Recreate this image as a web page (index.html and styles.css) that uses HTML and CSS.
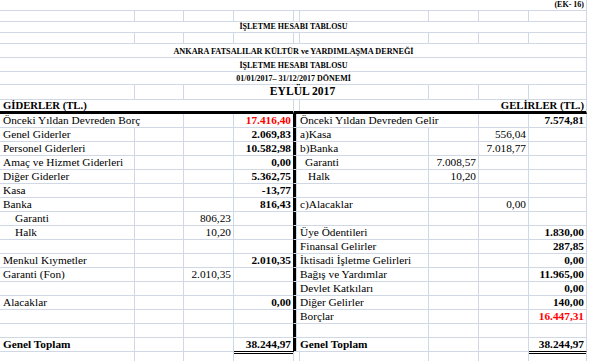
FILE: index.html
```html
<!DOCTYPE html>
<html lang="tr">
<head>
<meta charset="utf-8">
<title>İşletme Hesabı Tablosu</title>
<link rel="stylesheet" href="styles.css">
</head>
<body>
<div class="sheet">
  <!-- row 0 -->
  <div class="c s9 r t-small">(EK- 16)</div>
  <!-- row 1 -->
  <div class="c"></div><div class="c"></div><div class="c"></div><div class="c"></div><div class="c"></div><div class="c"></div><div class="c"></div><div class="c"></div><div class="c"></div>
  <!-- row 2 -->
  <div class="c s9 ctr t-small">İŞLETME HESABI TABLOSU</div>
  <!-- row 3 -->
  <div class="c"></div><div class="c"></div><div class="c"></div><div class="c"></div><div class="c"></div><div class="c"></div><div class="c"></div><div class="c"></div><div class="c"></div>
  <!-- row 4 -->
  <div class="c s9 ctr t-small t-wide">ANKARA FATSALILAR KÜLTÜR ve YARDIMLAŞMA DERNEĞİ</div>
  <!-- row 5 -->
  <div class="c s9 ctr t-small">İŞLETME HESABI TABLOSU</div>
  <!-- row 6 -->
  <div class="c s9 ctr t-small">01/01/2017– 31/12/2017 DÖNEMİ</div>
  <!-- row 7 -->
  <div class="c"></div><div class="c"></div>
  <div class="c s4 ctr t-month">EYLÜL 2017</div>
  <div class="c"></div><div class="c"></div><div class="c"></div>
  <!-- row 8 -->
  <div class="c s4 hd t-head">GİDERLER (TL.)</div>
  <div class="c hd"></div>
  <div class="c s4 hd r t-head">GELİRLER (TL.)</div>

  <!-- data 1 -->
  <div class="c s2">Önceki Yıldan Devreden Borç</div><div class="c"></div><div class="c r b red lb">17.416,40</div><div class="c bar"></div>
  <div class="c s2">Önceki Yıldan Devreden Gelir</div><div class="c"></div><div class="c r b">7.574,81</div>
  <!-- data 2 -->
  <div class="c">Genel Giderler</div><div class="c"></div><div class="c"></div><div class="c r b lb">2.069,83</div><div class="c bar"></div>
  <div class="c">a)Kasa</div><div class="c"></div><div class="c r">556,04</div><div class="c"></div>
  <!-- data 3 -->
  <div class="c">Personel Giderleri</div><div class="c"></div><div class="c"></div><div class="c r b lb">10.582,98</div><div class="c bar"></div>
  <div class="c">b)Banka</div><div class="c"></div><div class="c r">7.018,77</div><div class="c"></div>
  <!-- data 4 -->
  <div class="c">Amaç ve Hizmet Giderleri</div><div class="c"></div><div class="c"></div><div class="c r b lb">0,00</div><div class="c bar"></div>
  <div class="c in1">Garanti</div><div class="c r">7.008,57</div><div class="c"></div><div class="c"></div>
  <!-- data 5 -->
  <div class="c">Diğer Giderler</div><div class="c"></div><div class="c"></div><div class="c r b lb">5.362,75</div><div class="c bar"></div>
  <div class="c in2">Halk</div><div class="c r">10,20</div><div class="c"></div><div class="c"></div>
  <!-- data 6 -->
  <div class="c">Kasa</div><div class="c"></div><div class="c"></div><div class="c r b lb">-13,77</div><div class="c bar"></div>
  <div class="c"></div><div class="c"></div><div class="c"></div><div class="c"></div>
  <!-- data 7 -->
  <div class="c">Banka</div><div class="c"></div><div class="c"></div><div class="c r b lb">816,43</div><div class="c bar"></div>
  <div class="c">c)Alacaklar</div><div class="c"></div><div class="c r">0,00</div><div class="c"></div>
  <!-- data 8 -->
  <div class="c in3">Garanti</div><div class="c"></div><div class="c r">806,23</div><div class="c lb"></div><div class="c bar"></div>
  <div class="c"></div><div class="c"></div><div class="c"></div><div class="c"></div>
  <!-- data 9 -->
  <div class="c in3">Halk</div><div class="c"></div><div class="c r">10,20</div><div class="c lb"></div><div class="c bar"></div>
  <div class="c">Üye Ödentileri</div><div class="c"></div><div class="c"></div><div class="c r b">1.830,00</div>
  <!-- data 10 -->
  <div class="c"></div><div class="c"></div><div class="c"></div><div class="c lb"></div><div class="c bar"></div>
  <div class="c">Finansal Gelirler</div><div class="c"></div><div class="c"></div><div class="c r b">287,85</div>
  <!-- data 11 -->
  <div class="c">Menkul Kıymetler</div><div class="c"></div><div class="c"></div><div class="c r b lb">2.010,35</div><div class="c bar"></div>
  <div class="c">İktisadi İşletme Gelirleri</div><div class="c"></div><div class="c"></div><div class="c r b">0,00</div>
  <!-- data 12 -->
  <div class="c">Garanti (Fon)</div><div class="c"></div><div class="c r">2.010,35</div><div class="c lb"></div><div class="c bar"></div>
  <div class="c">Bağış ve Yardımlar</div><div class="c"></div><div class="c"></div><div class="c r b">11.965,00</div>
  <!-- data 13 -->
  <div class="c"></div><div class="c"></div><div class="c"></div><div class="c lb"></div><div class="c bar"></div>
  <div class="c">Devlet Katkıları</div><div class="c"></div><div class="c"></div><div class="c r b">0,00</div>
  <!-- data 14 -->
  <div class="c">Alacaklar</div><div class="c"></div><div class="c"></div><div class="c r b lb">0,00</div><div class="c bar"></div>
  <div class="c">Diğer Gelirler</div><div class="c"></div><div class="c"></div><div class="c r b">140,00</div>
  <!-- data 15 -->
  <div class="c"></div><div class="c"></div><div class="c"></div><div class="c lb"></div><div class="c bar"></div>
  <div class="c">Borçlar</div><div class="c"></div><div class="c"></div><div class="c r b red">16.447,31</div>
  <!-- data 16 -->
  <div class="c"></div><div class="c"></div><div class="c"></div><div class="c lb"></div><div class="c bar"></div>
  <div class="c"></div><div class="c"></div><div class="c"></div><div class="c"></div>
  <!-- data 17 -->
  <div class="c b">Genel Toplam</div><div class="c"></div><div class="c"></div><div class="c r b lb tot">38.244,97</div><div class="c bar"></div>
  <div class="c b">Genel Toplam</div><div class="c"></div><div class="c"></div><div class="c r b tot">38.244,97</div>
  <!-- trailing row -->
  <div class="c"></div><div class="c"></div><div class="c"></div><div class="c under"></div><div class="c"></div><div class="c"></div><div class="c"></div><div class="c"></div><div class="c under"></div>
</div>
</body>
</html>
```
FILE: styles.css
```css
html, body {
  margin: 0;
  padding: 0;
  background: #ffffff;
}

.sheet {
  display: grid;
  grid-template-columns: 135px 49px 50px 60px 3px 132px 50px 50px 58px;
  grid-template-rows: 11px 11px 11px 11px 14px 14px 13px 15px 14px repeat(17, 14px) 14px;
  width: 587px;
  font-family: "Liberation Serif", "Times New Roman", serif;
  font-size: 11.3px;
  color: #000;
}

.c {
  box-sizing: border-box;
  border-right: 1px solid #d0d7e5;
  border-bottom: 1px solid #d0d7e5;
  display: flex;
  align-items: flex-end;
  justify-content: flex-start;
  padding: 0 2px 0 3px;
  white-space: nowrap;
  line-height: 13px;
  overflow: visible;
}

.s2 { grid-column: span 2; }
.s4 { grid-column: span 4; }
.s9 { grid-column: span 9; }

.r { justify-content: flex-end; }
.ctr { justify-content: center; }
.b { font-weight: bold; }
.red { color: #ff0000; }

.t-small {
  font-size: 8px;
  font-weight: bold;
  line-height: 10px;
}

.t-wide { font-size: 8.2px; }

.t-month {
  font-size: 11.6px;
  font-weight: bold;
  line-height: 14px;
  padding-right: 10px;
}

.t-head {
  font-size: 10.7px;
  font-weight: bold;
  line-height: 12px;
}

.hd {
  border-bottom: 3px solid #000;
}

.lb { border-right: 1px solid #000; }

.bar {
  background: #000;
  padding: 0;
}

.tot {
  border-bottom: 1px solid #000;
}

.under {
  box-shadow: inset 0 1px 0 #fff, inset 0 2px 0 #000;
}

.in1 { padding-left: 8px; }
.in2 { padding-left: 11px; }
.in3 { padding-left: 15px; }
```
